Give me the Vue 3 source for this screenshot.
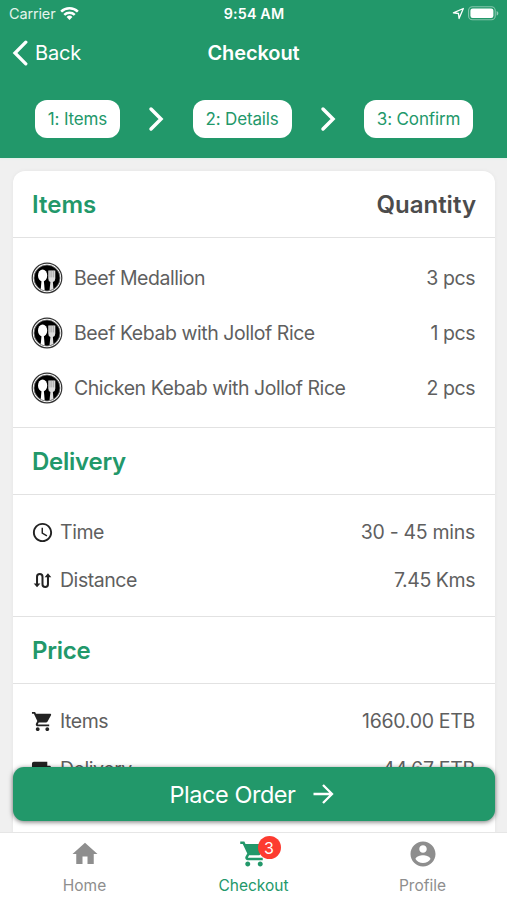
<script setup>
const steps = ['1: Items', '2: Details', '3: Confirm']

const items = [
  { name: 'Beef Medallion', qty: '3 pcs' },
  { name: 'Beef Kebab with Jollof Rice', qty: '1 pcs' },
  { name: 'Chicken Kebab with Jollof Rice', qty: '2 pcs' },
]
</script>

<template>
  <div class="screen">
    <header class="header">
      <div class="status">
        <div class="status-left">
          <span class="carrier">Carrier</span>
          <svg class="wifi" viewBox="0 0 20 15" width="19" height="15">
            <g fill="none" stroke="#fff" stroke-width="2.700">
              <path d="M1.200 5.600a12.600 12.600 0 0 1 17.600 0" />
              <path d="M4.500 9a7.900 7.900 0 0 1 11 0" />
            </g>
            <path d="M6.900 11.200a4.500 4.500 0 0 1 6.200 0L10 14.400z" fill="#fff" />
          </svg>
        </div>
        <span class="clock">9:54 AM</span>
        <div class="status-right">
          <svg viewBox="0 0 14 14" width="13" height="13">
            <path d="M1.500 6.300 12.200 1.600 7.600 12.400 7 7z" fill="none" stroke="#fff" stroke-width="1.400" stroke-linejoin="round" />
          </svg>
          <svg viewBox="0 0 31 15" width="31" height="15">
            <rect x=".6" y=".8" width="26.600" height="13" rx="3.800" fill="none" stroke="#fff" stroke-opacity=".45" stroke-width="1.100" />
            <rect x="2.400" y="2.600" width="23" height="9.400" rx="2.200" fill="#fff" />
            <path d="M28.600 5v4.600c1.200-.5 1.700-1.200 1.700-2.300S29.800 5.500 28.600 5z" fill="#fff" fill-opacity=".5" />
          </svg>
        </div>
      </div>

      <nav class="nav">
        <div class="back">
          <svg viewBox="0 0 16 26" width="16" height="26">
            <path d="M13.800 2.200 3 13l10.800 10.800" fill="none" stroke="#fff" stroke-width="3.300" stroke-linecap="round" stroke-linejoin="miter" />
          </svg>
          <span>Back</span>
        </div>
        <h1 class="title">Checkout</h1>
        <div></div>
      </nav>

      <div class="steps">
        <template v-for="(step, i) in steps" :key="step">
          <svg v-if="i > 0" viewBox="0 0 16 26" width="16" height="26">
            <path d="M3 3l10 10L3 23" fill="none" stroke="#fff" stroke-width="3.500" stroke-linecap="round" stroke-linejoin="miter" />
          </svg>
          <div class="pill" :class="'pill-' + (i + 1)">{{ step }}</div>
        </template>
      </div>
    </header>

    <main class="content">
      <section class="card">
        <div class="heading">
          <h2>Items</h2>
          <h2 class="dark">Quantity</h2>
        </div>
        <ul class="list first">
          <li v-for="item in items" :key="item.name" class="row tall">
            <svg class="plate" viewBox="0 0 32 32" width="32" height="32">
              <circle cx="16" cy="16" r="14.800" fill="#fff" stroke="#333" stroke-width="1.200" />
              <circle cx="16" cy="16" r="13" fill="#000" stroke="#777" stroke-width=".8" />
              <ellipse cx="11.600" cy="13.600" rx="4.600" ry="6" fill="#fff" />
              <path d="M10.600 18h2.200l.9 10.600-4-1.400z" fill="#fff" />
              <path d="M17.300 8.500h7v8q0 3-2.400 3.500l.5 7-3.900 1.600.9-8.600q-2.100-.5-2.100-3.500z" fill="#ddd" />
              <path d="M19 8.400v7M20.800 8.400v7M22.600 8.400v7" stroke="#888" stroke-width=".6" />
            </svg>
            <span class="name">{{ item.name }}</span>
            <span class="value">{{ item.qty }}</span>
          </li>
        </ul>

        <div class="heading ruled"><h2 class="tight">Delivery</h2></div>
        <ul class="list">
          <li class="row">
            <svg class="icon" viewBox="0 0 24 24" width="23" height="23">
              <path fill="#222" d="M11.990 2C6.470 2 2 6.480 2 12s4.470 10 9.990 10C17.520 22 22 17.520 22 12S17.520 2 11.990 2zM12 20c-4.420 0-8-3.580-8-8s3.580-8 8-8 8 3.580 8 8-3.580 8-8 8zm.5-13H11v6l5.250 3.150.75-1.230-4.500-2.670z" />
            </svg>
            <span class="name">Time</span>
            <span class="value numeric">30 - 45 mins</span>
          </li>
          <li class="row">
            <svg class="icon" viewBox="0 0 24 24" width="23" height="23">
              <path d="M6.300 16V8a2.850 2.850 0 0 1 5.700 0v8a2.850 2.850 0 0 0 5.700 0V8" fill="none" stroke="#222" stroke-width="2.100" />
              <path d="M2.800 15h7L6.300 19zM14.200 8.500h7l-3.500-4z" fill="#222" />
            </svg>
            <span class="name">Distance</span>
            <span class="value">7.45 Kms</span>
          </li>
        </ul>

        <div class="heading ruled"><h2 class="tight">Price</h2></div>
        <ul class="list">
          <li class="row">
            <svg class="icon" viewBox="0 0 24 24" width="23" height="23">
              <path fill="#222" d="M7 18c-1.100 0-1.990.9-1.990 2S5.900 22 7 22s2-.9 2-2-.9-2-2-2zM1 2v2h2l3.600 7.590-1.350 2.450c-.16.280-.25.610-.25.960 0 1.100.9 2 2 2h12v-2H7.420c-.14 0-.25-.11-.25-.25l.03-.12.900-1.630h7.450c.75 0 1.410-.41 1.750-1.030l3.580-6.490c.08-.14.120-.31.120-.48 0-.55-.45-1-1-1H5.210l-.94-2H1zm16 16c-1.100 0-1.990.9-1.990 2s.89 2 1.990 2 2-.9 2-2-.9-2-2-2z" />
            </svg>
            <span class="name">Items</span>
            <span class="value numeric">1660.00 ETB</span>
          </li>
          <li class="row">
            <svg class="icon" viewBox="0 0 24 24" width="23" height="23">
              <path fill="#222" d="M20 8h-3V4H3c-1.100 0-2 .9-2 2v11h2c0 1.660 1.340 3 3 3s3-1.340 3-3h6c0 1.660 1.340 3 3 3s3-1.340 3-3h2v-5l-3-4z" />
            </svg>
            <span class="name">Delivery</span>
            <span class="value numeric">44.67 ETB</span>
          </li>
        </ul>
      </section>
    </main>

    <button class="order">
      <span>Place Order</span>
      <svg viewBox="0 0 22 22" width="22" height="22">
        <path d="M1.500 11h18M11 2l9 9-9 9" fill="none" stroke="#fff" stroke-width="2.300" />
      </svg>
    </button>

    <footer class="tabs">
      <div class="tab">
        <svg viewBox="0 0 24 24" width="30" height="30">
          <path fill="#8e8e8e" d="M10 20v-6h4v6h5v-8h3L12 3 2 12h3v8z" />
        </svg>
        <span>Home</span>
      </div>
      <div class="tab active">
        <div class="cart">
          <svg viewBox="0 0 24 24" width="30" height="30">
            <path fill="#22986a" d="M7 18c-1.100 0-1.990.9-1.990 2S5.900 22 7 22s2-.9 2-2-.9-2-2-2zM1 2v2h2l3.600 7.590-1.350 2.450c-.16.280-.25.610-.25.960 0 1.100.9 2 2 2h12v-2H7.420c-.14 0-.25-.11-.25-.25l.03-.12.900-1.630h7.450c.75 0 1.410-.41 1.750-1.030l3.580-6.490c.08-.14.120-.31.120-.48 0-.55-.45-1-1-1H5.210l-.94-2H1zm16 16c-1.100 0-1.990.9-1.990 2s.89 2 1.990 2 2-.9 2-2-.9-2-2-2z" />
          </svg>
          <b class="badge">3</b>
        </div>
        <span>Checkout</span>
      </div>
      <div class="tab">
        <svg viewBox="0 0 24 24" width="30" height="30">
          <path fill="#8e8e8e" d="M12 2C6.480 2 2 6.480 2 12s4.480 10 10 10 10-4.480 10-10S17.520 2 12 2zm0 3c1.660 0 3 1.340 3 3s-1.340 3-3 3-3-1.340-3-3 1.340-3 3-3zm0 14.200c-2.500 0-4.710-1.280-6-3.220.03-1.990 4-3.080 6-3.080 1.990 0 5.970 1.090 6 3.080-1.290 1.940-3.500 3.220-6 3.220z" />
        </svg>
        <span>Profile</span>
      </div>
    </footer>
  </div>
</template>

<style>
body {
  margin: 0;
}
</style>

<style scoped>
* {
  box-sizing: border-box;
}
.screen {
  position: relative;
  display: flex;
  flex-direction: column;
  width: 507px;
  height: 900px;
  overflow: hidden;
  background: #f0f0f0;
  font-family: Inter, "Liberation Sans", sans-serif;
  color: #5f5f5f;
}
svg {
  display: block;
  flex: none;
}
.header {
  flex: none;
  height: 158px;
  background: #22986a;
  color: #fff;
  box-shadow: 0 1px 2px #dff0e8;
}
.status,
.nav {
  display: grid;
  grid-template-columns: 1fr auto 1fr;
  align-items: center;
}
.status {
  height: 27px;
  padding: 0 8px 0 9px;
  font-size: 14.5px;
}
.status-left,
.status-right {
  display: flex;
  align-items: center;
  gap: 6px;
}
.status-right {
  justify-content: flex-end;
  gap: 3px;
}
.carrier {
  color: #e4f4ec;
  letter-spacing: -0.15px;
}
.wifi {
  margin-left: -1px;
}
.clock {
  font-size: 14.3px;
  font-weight: 600;
  letter-spacing: 0.15px;
}
.nav {
  height: 51px;
  padding: 0 12px;
}
.back {
  display: flex;
  align-items: center;
  gap: 7px;
  font-size: 20px;
  letter-spacing: -0.2px;
}
.title {
  margin: 0;
  font-size: 20px;
  font-weight: 600;
  letter-spacing: -0.1px;
}
.steps {
  display: flex;
  align-items: center;
  justify-content: space-between;
  height: 82px;
  padding: 0 34px 0 35px;
}
.pill {
  display: flex;
  align-items: center;
  justify-content: center;
  height: 38px;
  border-radius: 12px;
  background: #fff;
  color: #22986a;
  font-size: 17px;
  letter-spacing: -0.15px;
}
.pill-1 {
  width: 85px;
}
.pill-2 {
  width: 99px;
}
.pill-3 {
  width: 109px;
}
.content {
  flex: 1;
  min-height: 0;
  padding: 13px 12px 0 13px;
  overflow: hidden;
}
.card {
  height: 760px;
  border-radius: 12px;
  background: #fff;
  box-shadow: 0 0 4px rgba(0, 0, 0, 0.05);
}
.heading {
  display: flex;
  align-items: center;
  justify-content: space-between;
  height: 67px;
  padding: 0 19px;
  border-bottom: 1px solid #e2e2e2;
}
.heading.ruled {
  height: 68px;
  border-top: 1px solid #e2e2e2;
}
h2 {
  margin: 0;
  color: #22986a;
  font-size: 24px;
  font-weight: 600;
}
h2.dark {
  color: #4c4c4c;
}
h2.tight {
  letter-spacing: -0.25px;
}
.list {
  margin: 0;
  padding: 13px 19px 12px;
  list-style: none;
}
.list.first {
  padding: 12px 19px;
}
.row {
  display: flex;
  align-items: center;
  height: 48px;
  font-size: 19.5px;
  letter-spacing: -0.45px;
}
.row.tall {
  height: 55px;
}
.plate {
  margin: 0 11px 0 -1px;
}
.icon {
  margin: 0 6px 0 -1px;
}
.value {
  margin-left: auto;
  margin-right: 1px;
}
.numeric {
  letter-spacing: -0.3px;
}
.order {
  position: absolute;
  left: 13px;
  top: 767px;
  display: flex;
  align-items: center;
  justify-content: center;
  gap: 16px;
  width: 482px;
  height: 54px;
  padding: 0 5px 0 0;
  border: 0;
  border-radius: 11px;
  background: #22986a;
  box-shadow: 0 1px 5px rgba(0, 0, 0, 0.55);
  color: #fff;
  font: 400 23.5px Inter, "Liberation Sans", sans-serif;
  letter-spacing: -0.45px;
}
.tabs {
  display: grid;
  grid-template-columns: repeat(3, 1fr);
  flex: none;
  height: 68px;
  border-top: 1px solid #e6e6e6;
  background: #fff;
  color: #8e8e8e;
  font-size: 15.5px;
}
.tab {
  display: flex;
  flex-direction: column;
  align-items: center;
  gap: 7px;
  padding-top: 6px;
}
.active {
  color: #22986a;
}
.cart {
  position: relative;
}
.badge {
  position: absolute;
  left: 19px;
  top: -3px;
  display: grid;
  place-items: center;
  width: 23px;
  height: 23px;
  border-radius: 50%;
  background: #fd3b30;
  color: #fff;
  font-size: 16px;
  font-weight: 400;
}
</style>
